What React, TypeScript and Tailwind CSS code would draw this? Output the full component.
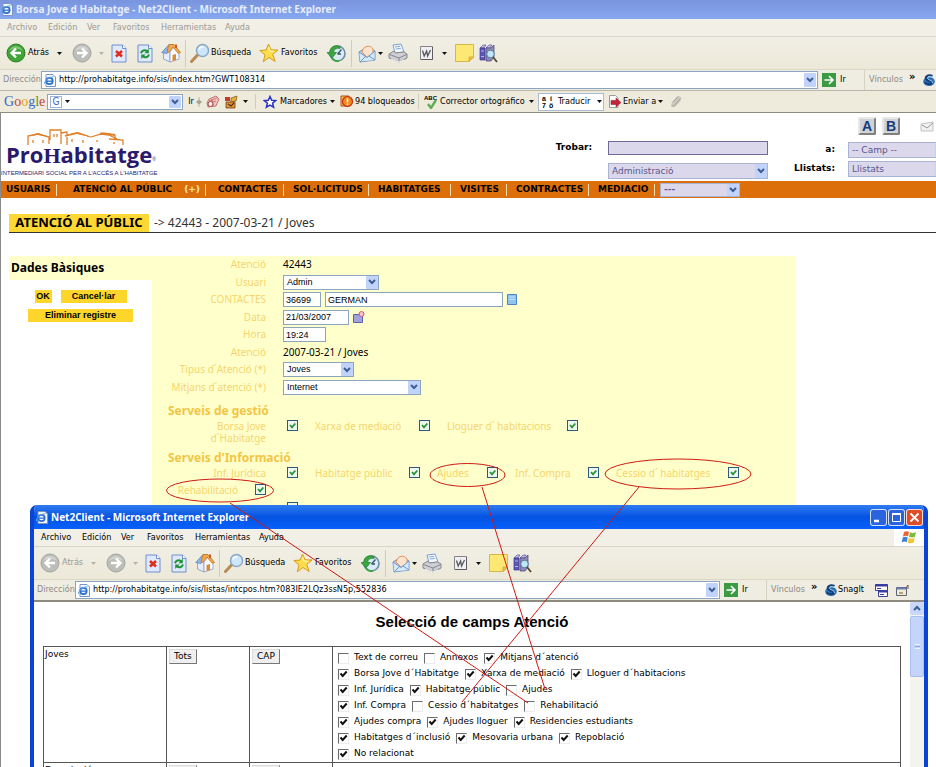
import React, { FC, ReactNode } from "react";

type Option = { label: string; checked: boolean };

/* ---------- small shared pieces ---------- */

const Caret: FC<{ muted?: boolean }> = ({ muted }) => (
  <svg width="5" height="3" viewBox="0 0 5 3" className="shrink-0">
    <path d="M0 0h5L2.500 3z" fill={muted ? "#b5b3a8" : "#111"} />
  </svg>
);

const Chevron = () => (
  <svg width="8" height="6" viewBox="0 0 8 6">
    <path d="M1 1l3 3 3-3" fill="none" stroke="#3d5d94" strokeWidth="2" />
  </svg>
);

const DropButton = () => (
  <span className="pointer-events-none absolute inset-y-px right-px flex w-[12px] items-center justify-center rounded-[1px] bg-[#c1d3fb]">
    <Chevron />
  </span>
);

const Select: FC<{ name: string; value: string; box: string; tone?: string }> = ({
  name,
  value,
  box,
  tone = "bg-white text-black border-[#8aa5bd]",
}) => (
  <span className={"relative flex shrink-0 " + box}>
    <select
      id={name}
      aria-label={name}
      defaultValue={value}
      className={"h-full w-full appearance-none border pl-[3px] leading-none outline-none " + tone}
    >
      <option>{value}</option>
    </select>
    <DropButton />
  </span>
);

const FormCheck: FC<{ id: string }> = ({ id }) => (
  <span className="relative flex size-[11px] shrink-0">
    <input
      id={id}
      type="checkbox"
      defaultChecked
      className="peer size-full appearance-none border border-[#2c5a78] bg-[#eef7ec]"
    />
    <svg
      viewBox="0 0 11 11"
      className="pointer-events-none invisible absolute inset-0 peer-checked:visible"
    >
      <path d="M3 5l2 2.300 3.300-3.800" fill="none" stroke="#27913c" strokeWidth="1.800" />
    </svg>
  </span>
);

/* ---------- toolbar icons ---------- */

const PageE = () => (
  <svg width="12" height="13" viewBox="0 0 12 13" className="shrink-0">
    <path d="M2 .5h7l2.500 2.500v9.500H2z" fill="#f4f8ff" stroke="#7d93c4" />
    <circle cx="5.500" cy="7" r="3.200" fill="none" stroke="#2a6fd0" strokeWidth="1.700" />
    <path d="M3 7.200h5.500" stroke="#2a6fd0" strokeWidth="1.300" />
    <path d="M.5 10C0 7 5 2.500 9.500 2.800" fill="none" stroke="#5fa8ea" />
  </svg>
);

const CircleArrow: FC<{ green?: boolean; back?: boolean }> = ({ green, back }) => (
  <svg width="20" height="20" viewBox="0 0 20 20" className="shrink-0">
    <circle
      cx="10"
      cy="10"
      r="9"
      fill={green ? "#3fa535" : "#bdbdb9"}
      stroke={green ? "#2c7f27" : "#a4a4a0"}
    />
    <path d="M3 8a7.500 7.500 0 0 1 14 0c-4-3-10-3-14 0z" fill="#fff" opacity=".35" />
    <path
      d={back ? "M15 10H6m4-4.500L5.500 10l4.500 4.500" : "M5 10h9m-4-4.500l4.500 4.500-4.500 4.500"}
      fill="none"
      stroke="#fff"
      strokeWidth="2.400"
    />
  </svg>
);

const StopIcon = () => (
  <svg width="16" height="19" viewBox="0 0 16 19">
    <path d="M1 1h10.500L15 4.500V18H1z" fill="#dfe9fb" stroke="#6f8fd0" />
    <path d="M11.500 1v3.500H15" fill="#fff" stroke="#6f8fd0" />
    <path d="M5 7l6 5.500M11 7l-6 5.500" stroke="#dd2c1a" strokeWidth="2.600" />
  </svg>
);

const RefreshIcon = () => (
  <svg width="16" height="19" viewBox="0 0 16 19">
    <path d="M1 1h10.500L15 4.500V18H1z" fill="#dfe9fb" stroke="#6f8fd0" />
    <path d="M11.500 1v3.500H15" fill="#fff" stroke="#6f8fd0" />
    <path d="M4 9.200c.6-3 4-3.700 6-2M12 10.500c-.8 3-4.200 3.500-6 1.800" fill="none" stroke="#1f9436" strokeWidth="2" />
    <path d="M11.800 4.500v4.700H7.500zM4.200 15v-4.500h4.300z" fill="#1f9436" />
  </svg>
);

const HomeIcon = () => (
  <svg width="20" height="20" viewBox="0 0 20 20">
    <path d="M2.500 10v6l6.500 3V9L7 4z" fill="#e8edfb" stroke="#7e96cc" strokeWidth=".8" />
    <path d="M9 19l9-3V8l-4-5-5 6z" fill="#fbfbff" stroke="#8c9cc9" strokeWidth=".8" />
    <path d="M.8 9.500L8 1.500l4 .5-6 8.500z" fill="#8eb4ee" stroke="#5e82c4" strokeWidth=".8" />
    <path d="M8 1.500l5 0 6.500 8-2.300.8L12 4 7.500 9.500 6 8.500z" fill="#f3a94c" stroke="#c27418" strokeWidth=".8" />
    <path d="M11.500 12l3.500-1v6l-3.500 1.200z" fill="#d98a35" />
    <path d="M14 1.500h2v3.500h-2z" fill="#c9583a" />
  </svg>
);

const SearchIcon = () => (
  <svg width="20" height="20" viewBox="0 0 20 20">
    <path d="M1.500 18.500l6.500-7" stroke="#b98a55" strokeWidth="3" strokeLinecap="round" />
    <circle cx="12.500" cy="7.500" r="6" fill="#cde6fb" stroke="#8aa7c6" strokeWidth="1.500" />
    <path d="M9 6.500c.8-2 2.500-3 4.500-2.700" fill="none" stroke="#fff" strokeWidth="1.500" />
  </svg>
);

const StarIcon = () => (
  <svg width="20" height="20" viewBox="0 0 20 20">
    <path
      d="M9.500 1l2.600 5.800 6.900.2-5.300 4.300 2.500 7.200-6.200-4-5.700 4.300 1.700-6.900L.8 7.500l6.200-.4z"
      fill="#fddc4e"
      stroke="#d89a1e"
    />
    <path d="M9.500 4l1.300 4 4 .3" fill="none" stroke="#fff6b8" strokeWidth="1.300" />
  </svg>
);

const HistoryIcon = () => (
  <svg width="19" height="19" viewBox="0 0 19 19">
    <circle cx="10.500" cy="9.500" r="7.500" fill="#d9ebf6" stroke="#6e8da6" strokeWidth="1.600" />
    <path d="M10.500 10l4-4.500M10.500 10h3.500" stroke="#3a536b" strokeWidth="1.300" />
    <path d="M13 2.500C7 0 2.500 4 2.800 8.500H0L5 14l4.500-5.500H6.800C6.500 6 9 3.800 13 4.500z" fill="#3aa63f" stroke="#237a2b" strokeWidth=".7" />
    <path d="M5 14c1.500 2.500 4 3.500 7 2.800" fill="none" stroke="#3aa63f" strokeWidth="1.800" />
  </svg>
);

const MailIcon = () => (
  <svg width="18" height="19" viewBox="0 0 18 19">
    <path d="M1 8l8-5 8 4v9L2 18z" fill="#bcd8f4" stroke="#6e94c2" />
    <path d="M4 8c1-6 8-8 11-3v5l-6 3z" fill="#fbe3d0" stroke="#e2935a" />
    <path d="M1.500 8.500L9 13l7.500-5.500V16L2 17.500z" fill="#d6e9fb" />
    <path d="M1 8l8 5.500L17 7M2 18l5.500-5.500M17 16l-6-4" fill="none" stroke="#6e94c2" />
  </svg>
);

const PrintIcon = () => (
  <svg width="20" height="20" viewBox="0 0 20 20">
    <path d="M5 2l8-1 3 8-9 1z" fill="#f3f8ff" stroke="#7c9fd6" />
    <path d="M7 4l5-.6M7.800 6l5-.6" stroke="#86a8dc" />
    <path d="M1 11l5-3 1.500 2 8-1 3.500 2v4l-8 4-10-4z" fill="#d0d0d4" stroke="#85858e" />
    <path d="M1.500 11.500l9.500 3.500 7.500-3.500M11 15v3.500" fill="none" stroke="#85858e" />
    <path d="M3 16l8 3 5-2" fill="none" stroke="#f8f8f8" />
  </svg>
);

const WordIcon = () => (
  <svg width="13" height="14" viewBox="0 0 13 14">
    <path d="M.5.5h12v13H.5z" fill="#f0f0f0" stroke="#84848a" />
    <path d="M12.500 1v12.500H1" fill="none" stroke="#5c5c62" />
    <path d="M2.500 4.500l1.700 5.500L6.600 5l1 5L10.500 4" fill="none" stroke="#55565e" strokeWidth="1.300" />
  </svg>
);

const NoteIcon = () => (
  <svg width="19" height="18" viewBox="0 0 19 18">
    <path d="M.5.5h18V13L14 17.500H.5z" fill="#fde874" stroke="#d9b64a" />
    <path d="M18.500 13H14v4.500z" fill="#f3c63c" stroke="#c89d2c" strokeWidth=".7" />
  </svg>
);

const BooksIcon = () => (
  <svg width="19" height="19" viewBox="0 0 19 19">
    <path d="M1 4l3-3h3l-2 3zM7 4l3-3h3l-2 3z" fill="#c8c4e8" stroke="#56509c" strokeWidth=".7" />
    <path d="M1 4h5v12H1z" fill="#5c56b4" stroke="#3d3889" strokeWidth=".7" />
    <path d="M7 4h5l3-3v12l-3 4H7z" fill="#8f8bb8" stroke="#44406e" strokeWidth=".7" />
    <path d="M2 7h3M2 12.500h3" stroke="#b7b3ee" />
    <circle cx="11.500" cy="10" r="3.800" fill="#bfe6f8" stroke="#5a7d93" />
    <path d="M14 13l4 5" stroke="#54452f" strokeWidth="1.800" />
  </svg>
);

const WindowsFlag = () => (
  <svg width="16" height="15" viewBox="0 0 16 15">
    <path d="M3 2c2-1.200 3.500-1 5 0L7 6.500c-1.500-1-3-1-5 0z" fill="#e9642f" />
    <path d="M9 2.300c2 1 4 1 6-.2L14 6.700c-2 1-4 1-6 .1z" fill="#7dbb3c" />
    <path d="M1.700 7.500c2-1.100 3.500-1 5 0l-1 4.800c-1.500-1-3-1-5 .1z" fill="#3c7fd8" />
    <path d="M7.700 8c2 1 4 1 6-.2l-1 4.700c-2 1-4 1-6 .2z" fill="#f6c332" />
  </svg>
);

const SnagItIcon = () => (
  <svg width="12" height="13" viewBox="0 0 12 13" className="shrink-0">
    <ellipse cx="6" cy="7.500" rx="5.800" ry="4.500" fill="#2c6fb4" />
    <path d="M9.500 2C5 0 1 3 3.500 5.500S9 7 8.500 9 4 10 1.500 8.500" fill="none" stroke="#123f75" strokeWidth="2" />
    <path d="M9.500 3C6 2 3.500 3.500 5 5s5 1.500 4.500 4" fill="none" stroke="#a9d6f5" />
  </svg>
);

/* ---------- browser bars ---------- */

const Menu: FC<{ muted?: boolean; flag?: boolean }> = ({ muted, flag }) => (
  <nav
    className={
      "flex h-[18px] shrink-0 items-center border-b border-[#d9d6c8] bg-[#f1efe6] " +
      (muted ? "text-[#9b9a92]" : "text-black")
    }
  >
    <button className="w-[41px] pl-[7px] text-left">Archivo</button>
    <button className="w-[39px] pl-[7px] text-left">Edición</button>
    <button className="w-[26px] pl-[7px] text-left">Ver</button>
    <button className="w-[48px] pl-[7px] text-left">Favoritos</button>
    <button className="w-[64px] pl-[7px] text-left">Herramientas</button>
    <button className="pl-[7px] text-left">Ayuda</button>
    {flag && (
      <span className="ml-auto flex h-full w-[30px] items-center justify-center bg-white">
        <WindowsFlag />
      </span>
    )}
  </nav>
);

const Toolbar: FC<{ muted?: boolean }> = ({ muted }) => (
  <div className="flex h-[33px] shrink-0 items-center border-b border-[#dcd8c6] bg-gradient-to-b from-[#f1efe5] to-[#ece9d9] pl-[6px]">
    <button
      className={"flex w-[66px] shrink-0 items-center gap-[2px] " + (muted ? "text-[#9b9a92]" : "")}
    >
      <CircleArrow green={!muted} back />
      <span className="w-[27px] text-left">Atrás</span>
      <Caret muted={muted} />
    </button>
    <button aria-label="Adelante" className="flex w-[39px] shrink-0 items-center gap-[7px]">
      <CircleArrow />
      <Caret muted />
    </button>
    <button aria-label="Detener" className="w-[26px] shrink-0"><StopIcon /></button>
    <button aria-label="Actualizar" className="w-[24px] shrink-0"><RefreshIcon /></button>
    <button aria-label="Inicio" className="h-[27px] w-[25px] shrink-0 border-r border-[#cfccbc]">
      <HomeIcon />
    </button>
    <button className="ml-[4px] flex w-[69px] shrink-0 items-center gap-px">
      <SearchIcon />
      Búsqueda
    </button>
    <button className="flex w-[68px] shrink-0 items-center gap-[2px]">
      <StarIcon />
      Favoritos
    </button>
    <button aria-label="Historial" className="h-[27px] w-[25px] shrink-0 border-r border-[#cfccbc]">
      <HistoryIcon />
    </button>
    <button aria-label="Correo" className="ml-[6px] flex w-[30px] shrink-0 items-center gap-[2px]">
      <MailIcon />
      <Caret />
    </button>
    <button aria-label="Imprimir" className="w-[32px] shrink-0"><PrintIcon /></button>
    <button aria-label="Editar" className="flex w-[35px] shrink-0 items-center gap-[9px]">
      <WordIcon />
      <Caret />
    </button>
    <button aria-label="Nota" className="w-[24px] shrink-0"><NoteIcon /></button>
    <button aria-label="Referencia" className="w-[24px] shrink-0"><BooksIcon /></button>
  </div>
);

const AddressBar: FC<{ id: string; url: string; side: string; full?: boolean }> = ({
  id,
  url,
  side,
  full,
}) => (
  <div className="flex h-[20px] shrink-0 items-center bg-[#efede2]">
    <label htmlFor={id} className="w-[41px] shrink-0 pl-[3px] text-[#8b8a83]">
      Dirección
    </label>
    <div className="relative flex h-[18px] min-w-0 flex-1 items-center gap-[3px] border border-[#8aa5bd] bg-white pl-[2px]">
      <PageE />
      <input id={id} defaultValue={url} className="min-w-0 flex-1 bg-transparent outline-none" />
      <DropButton />
    </div>
    <div className={"flex h-full shrink-0 items-center overflow-hidden " + side}>
      <button className="flex w-[46px] shrink-0 items-center gap-[4px] pl-[4px]">
        <svg width="14" height="14" viewBox="0 0 14 14">
          <path d="M0 0h14v14H0z" fill="#3b9b42" />
          <path d="M2.500 7h8M7 3l4 4-4 4" fill="none" stroke="#fff" strokeWidth="1.600" />
        </svg>
        Ir
      </button>
      <button className="flex h-full w-[53px] shrink-0 items-center gap-[6px] border-l border-[#d5d2c2] pl-[4px] text-[#8b8a83]">
        Vínculos
        <span className="mb-[8px] text-[11px] leading-none font-bold text-black">»</span>
      </button>
      <button aria-label="SnagIt" className="ml-[6px] flex shrink-0 items-center gap-px">
        <SnagItIcon />
        {full && "SnagIt"}
      </button>
      {full && (
        <span className="ml-[11px] flex gap-[8px]">
          <svg width="13" height="13" viewBox="0 0 13 13">
            <path d="M.5.5h12v6H.5zM3.500 6.500h9v6h-9z" fill="#fff" stroke="#3a3f9e" />
            <path d="M.5.5h12v2H.5zM3.500 6.500h9v2h-9z" fill="#3a3f9e" />
            <path d="M2 4.500h4M5 10.500h4" stroke="#3a3f9e" />
          </svg>
          <svg width="14" height="13" viewBox="0 0 14 13">
            <path d="M.5 3.500h10v8H.5z" fill="#f3ecd3" stroke="#5d6473" />
            <path d="M.5 3.500h10v2H.5z" fill="#6c7fb5" />
            <path d="M3 9h4M10 4l2-3v4" fill="none" stroke="#6a5a3c" />
          </svg>
        </span>
      )}
    </div>
  </div>
);

const GoogleBar = () => (
  <div className="flex h-[23px] shrink-0 items-center overflow-hidden border-y border-t-[#b9b7a9] border-b-[#8d8b7e] bg-[#eeebdd]">
    <span className="w-[47px] shrink-0 pl-[4px] font-['Liberation_Serif',serif] text-[14px]">
      <span className="text-[#3a66c9]">G</span>
      <span className="text-[#cf3d2e]">o</span>
      <span className="text-[#dba520]">o</span>
      <span className="text-[#3a66c9]">g</span>
      <span className="text-[#3c9a46]">l</span>
      <span className="text-[#cf3d2e]">e</span>
    </span>
    <span className="relative flex h-[16px] w-[136px] shrink-0 items-center gap-[3px] border border-[#8aa5bd] bg-white pl-[2px]">
      <span className="flex size-[12px] items-center justify-center border border-[#9fb3d8] text-[10px] text-[#3a66c9]">
        G
      </span>
      <Caret />
      <input aria-label="Buscar" className="w-[90px] outline-none" />
      <DropButton />
    </span>
    <button className="w-[13px] shrink-0 pl-[3px]">Ir</button>
    <svg width="6" height="10" viewBox="0 0 6 10" className="shrink-0">
      <path d="M3 0v10" stroke="#bdbaa9" />
      <path d="M0 5l3-2.500L6 5 3 7.500z" fill="#a5a396" />
    </svg>
    <svg width="14" height="13" viewBox="0 0 14 13" className="ml-[4px] shrink-0">
      <path d="M3 4l7-3 3 3-3 7-8 1-1-4z" fill="#f2c4c0" stroke="#b0605a" strokeWidth=".8" />
      <path d="M3 6l8-3M3 8.500l7-2.500M5.500 4l2 6.500" stroke="#c4615c" strokeWidth=".8" />
      <circle cx="4.500" cy="9" r="2.500" fill="#f7eeee" stroke="#a54848" />
    </svg>
    <svg width="14" height="14" viewBox="0 0 14 14" className="ml-[4px] shrink-0">
      <path d="M1 2h5v4H1z" fill="#c33b28" />
      <path d="M7 3l6-2-1 5-5 1z" fill="#e2b12f" stroke="#7a5417" strokeWidth=".7" />
      <path d="M2 7h9v6H2z" fill="#e09336" stroke="#6e3d17" strokeWidth=".8" />
      <path d="M4 9l3 2 3-3" fill="none" stroke="#54330f" strokeWidth="1.200" />
    </svg>
    <span className="flex h-[15px] w-[18px] shrink-0 items-center border-r border-[#cfccbc] pl-[5px]">
      <Caret />
    </span>
    <button className="flex w-[84px] shrink-0 items-center gap-[3px] pl-[7px]">
      <svg width="14" height="14" viewBox="0 0 14 14">
        <path
          d="M7 1.500l1.700 3.700 3.900.4-3 2.600 1 4L7 10.100l-3.600 2.100 1-4-3-2.600 3.900-.4z"
          fill="#fff"
          stroke="#2531c8"
          strokeWidth="1.500"
        />
      </svg>
      Marcadores
      <Caret />
    </button>
    <button className="flex h-[15px] w-[79px] shrink-0 items-center gap-[2px] border-r border-[#cfccbc]">
      <svg width="13" height="13" viewBox="0 0 13 13">
        <path d="M1 1h8v10H1z" fill="#f5c84b" stroke="#b4481d" />
        <circle cx="7.500" cy="6.500" r="5" fill="#f08a1d" stroke="#c9301a" strokeWidth="1.200" />
        <path d="M7.500 3.500v3.800M7.500 8.500v1.300" stroke="#fff" strokeWidth="1.500" />
      </svg>
      94 bloqueados
    </button>
    <button className="flex w-[119px] shrink-0 items-center gap-[2px] pl-[5px]">
      <svg width="14" height="14" viewBox="0 0 14 14">
        <text x="0" y="5" fontSize="6" fontWeight="bold" fontFamily="Liberation Sans">ABC</text>
        <path d="M4 9l3 4 5-8" fill="none" stroke="#5fae57" strokeWidth="2.400" />
      </svg>
      <span className="w-[87px] text-left">Corrector ortográfico</span>
      <Caret />
    </button>
    <button className="flex h-[18px] w-[66px] shrink-0 items-center gap-[4px] border border-[#a9bcd4] bg-white pl-[3px]">
      <svg width="12" height="14" viewBox="0 0 12 14">
        <g fontSize="7" fontWeight="bold" fontFamily="Liberation Sans">
          <text x="0" y="6">a</text>
          <text x="8" y="6">í</text>
          <text x="0" y="13">7</text>
          <text x="7" y="13">ö</text>
        </g>
      </svg>
      <span className="w-[35px] text-left">Traducir</span>
      <Caret />
    </button>
    <button className="flex w-[66px] shrink-0 items-center gap-[2px] pl-[4px]">
      <svg width="13" height="13" viewBox="0 0 13 13">
        <path d="M1.500.5h6L10 3v9.500H1.500z" fill="#fff" stroke="#9a9a9a" />
        <path d="M3 5.500h5V3l5 4.500-5 4.500V9.500H3z" fill="#c2243a" stroke="#8a1426" strokeWidth=".5" />
      </svg>
      Enviar a
      <Caret />
    </button>
    <svg width="12" height="13" viewBox="0 0 12 13" className="shrink-0">
      <path d="M1 11l1-4 6-6 3 1-.5 4L5 12z" fill="#c9c7be" />
      <path d="M8 1.500L3 7M10.500 3.500L5 10M1.500 11h3" stroke="#a3a197" />
    </svg>
  </div>
);

/* ---------- ProHabitatge page ---------- */

const Logo = () => (
  <a href="#inici" className="mt-[15px] block w-[160px] shrink-0 whitespace-nowrap">
    <svg width="110" height="18" viewBox="0 0 110 18" className="ml-[24px] block">
      <g fill="none" stroke="#e0812a" strokeWidth="1.300">
        <path d="M3 17V8l10-2 11 3v7M25 12V2h11v14M36 5l6-1v4M40 8l12-3 14 4M42 9v8M66 9l10-3 8 1 8 4M76 7V5l14 2v4M84 11l14 1v5" />
        <path d="M8 12v3M18 12v3M29 6v3M32 6v3M47 11v3M58 12v3M72 12v2M89 14v2" />
      </g>
      <path d="M2 8l11-3 12 4-12-2zM40 7l13-3 13 5-14-3zM76 4l14 2v2z" fill="#e0812a" />
    </svg>
    <span className="-mt-[4px] block pl-[5px] text-[22px] leading-[24px] font-bold text-[#2b1a6b]">
      <span className="font-['Open_Sans','Noto_Sans',sans-serif]">Pro</span>
      <span className="font-['Liberation_Serif',serif]">H</span>
      <span className="font-['Open_Sans','Noto_Sans',sans-serif]">abitatge</span>
      <sup className="font-['Liberation_Sans',sans-serif] text-[5px] font-normal">®</sup>
    </span>
    <span className="mt-px block font-['Liberation_Sans',sans-serif] text-[6px] leading-[8px] text-[#2b1a6b]">
      INTERMEDIARI SOCIAL PER A L'ACCÉS A L'HABITATGE
    </span>
  </a>
);

const LetterButton: FC<{ children: ReactNode }> = ({ children }) => (
  <button className="flex size-[18px] items-center justify-center rounded-[2px] border-2 border-t-[#e8e8e8] border-r-[#7f7f7f] border-b-[#7f7f7f] border-l-[#e8e8e8] bg-[#cfd2d6] font-['Liberation_Sans',sans-serif] text-[14px] leading-none font-bold text-[#173a78]">
    {children}
  </button>
);

const lilac = "bg-[#dad8ea] text-[#5b5690] border-[#a9b4d4]";

const PageHeader = () => (
  <header className="flex h-[68px] shrink-0 justify-between overflow-hidden bg-white">
    <Logo />
    <div className="flex shrink-0 font-['DejaVu_Sans',sans-serif]">
      <div className="mt-[28px] grid h-[38px] grid-cols-[40px_160px] content-between gap-x-[16px]">
        <label htmlFor="trobar" className="text-right font-bold">Trobar:</label>
        <input id="trobar" className="h-[14px] border border-[#6f6b96] bg-[#dad8ea] outline-none" />
        <Select name="Departament" value="Administració" box="col-start-2 h-[16px]" tone={lilac} />
      </div>
      <div className="w-[168px]">
        <div className="mt-[3px] flex h-[20px] items-center gap-[6px] pl-[90px]">
          <LetterButton>A</LetterButton>
          <LetterButton>B</LetterButton>
          <svg width="14" height="11" viewBox="0 0 14 11" className="ml-[14px] shrink-0">
            <path d="M1 3l12-2v9H1z" fill="#f1f1f1" stroke="#c2c2c2" />
            <path d="M2 4l5 3 6-5" fill="none" stroke="#9a9a9a" />
          </svg>
        </div>
        <div className="mt-[6px] grid grid-cols-[67px_100px] items-center gap-x-[13px] gap-y-[3px]">
          <label htmlFor="Camp" className="text-right font-bold">a:</label>
          <Select name="Camp" value="-- Camp --" box="h-[16px]" tone={lilac} />
          <label htmlFor="Llistats" className="text-right font-bold">Llistats:</label>
          <Select name="Llistats" value="Llistats" box="h-[16px]" tone={lilac} />
        </div>
      </div>
    </div>
  </header>
);

const navItems = [
  { text: "USUARIS", box: "w-[56px] pl-[5px]" },
  { text: "ATENCIÓ AL PÚBLIC", box: "w-[149px] pl-[16px]", plus: true },
  { text: "CONTACTES", box: "w-[78px] pl-[12px]" },
  { text: "SOL·LICITUDS", box: "w-[85px] pl-[9px]" },
  { text: "HABITATGES", box: "w-[82px] pl-[9px]" },
  { text: "VISITES", box: "w-[56px] pl-[9px]" },
  { text: "CONTRACTES", box: "w-[82px] pl-[9px]" },
  { text: "MEDIACIO", box: "w-[66px] pl-[9px]" },
];

const NavBar = () => (
  <nav className="flex h-[17px] shrink-0 items-center bg-[#dc6f0a] font-['DejaVu_Sans',sans-serif] font-bold">
    {navItems.map((item) => (
      <a
        key={item.text}
        href="#menu"
        className={
          "flex h-[12px] shrink-0 items-center justify-between border-r border-[#f6dcae] pr-[5px] whitespace-nowrap text-black " +
          item.box
        }
      >
        {item.text}
        {item.plus && <span className="text-[#ffe9b8]">(+)</span>}
      </a>
    ))}
    <Select name="Altres" value="---" box="ml-[5px] h-[14px] w-[80px]" tone={lilac} />
  </nav>
);

const Row: FC<{ label: string; htmlFor?: string; children: ReactNode }> = ({
  label,
  htmlFor,
  children,
}) => (
  <div className="flex items-center">
    <label htmlFor={htmlFor} className="w-[114px] shrink-0 text-right text-[#f6d56c]">
      {label}
    </label>
    <div className="ml-[17px] flex items-center gap-[4px]">{children}</div>
  </div>
);

const field =
  "h-[15px] border border-[#8aa5bd] bg-white pl-[2px] font-['Liberation_Sans',sans-serif] text-[9px] outline-none";
const formSelect = "h-[15px] font-['Liberation_Sans',sans-serif] text-[9px] ";

const gestio = [
  { text: "Borsa Jove\nd´Habitatge", box: "w-[118px] pr-[4px] text-right" },
  { text: "Xarxa de mediació", box: "w-[87px]" },
  { text: "Lloguer d´ habitacions", box: "w-[103px]" },
];

const informacio = [
  { text: "Inf. Jurídica", box: "w-[118px] pr-[4px] text-right" },
  { text: "Habitatge públic", box: "w-[77px]" },
  { text: "Ajudes", box: "w-[33px]" },
  { text: "Inf. Compra", box: "w-[56px]" },
  { text: "Cessio d´ habitatges", box: "w-[95px]" },
  { text: "Rehabilitació", box: "w-[86px] text-right" },
];

const Services: FC<{ items: { text: string; box: string }[] }> = ({ items }) => (
  <div className="flex flex-wrap items-start gap-x-[17px] gap-y-[5px]">
    {items.map((item) => (
      <span key={item.text} className="flex gap-[17px]">
        <label
          htmlFor={item.text}
          className={"shrink-0 leading-[12px] whitespace-pre text-[#f6d56c] " + item.box}
        >
          {item.text}
        </label>
        <FormCheck id={item.text} />
      </span>
    ))}
  </div>
);

const RecordForm = () => (
  <form className="flex items-start pl-[8px] font-['Noto_Sans',sans-serif] text-[10px]">
    <aside className="w-[143px] shrink-0">
      <h2 className="h-[24px] bg-[#ffffcc] pl-[2px] text-[12px] leading-[24px] font-bold">
        Dades Bàsiques
      </h2>
      <div className="flex flex-wrap justify-center gap-x-[9px] gap-y-[6px] pt-[10px] font-['Liberation_Sans',sans-serif] text-[9px] font-bold">
        <button type="button" className="h-[13px] w-[17px] bg-[#fdd52b]">OK</button>
        <button type="button" className="h-[13px] w-[66px] bg-[#fdd52b]">Cancel·lar</button>
        <button type="button" className="h-[13px] w-[105px] bg-[#fdd52b]">Eliminar registre</button>
      </div>
    </aside>
    <div className="mr-[140px] h-[520px] min-w-0 flex-1 bg-[#ffffcc]">
      <div className="grid h-[140px] auto-rows-fr">
        <Row label="Atenció">42443</Row>
        <Row label="Usuari" htmlFor="Usuari">
          <Select name="Usuari" value="Admin" box={formSelect + "w-[96px]"} />
        </Row>
        <Row label="CONTACTES" htmlFor="contacte">
          <input id="contacte" defaultValue="36699" className={field + " w-[38px]"} />
          <input aria-label="Nom" defaultValue="GERMAN" className={field + " w-[178px]"} />
          <svg width="10" height="11" viewBox="0 0 10 11">
            <path d="M.5.5h9v10h-9z" fill="#8fc3f2" stroke="#4c86c6" />
            <path d="M2 3h6M2 5.500h6" stroke="#c3e2fb" />
          </svg>
        </Row>
        <Row label="Data" htmlFor="data">
          <input id="data" defaultValue="21/03/2007" className={field + " w-[66px]"} />
          <svg width="12" height="12" viewBox="0 0 12 12">
            <path d="M.5 3.500h9v8h-9z" fill="#a3a3dc" stroke="#5b62ae" />
            <circle cx="8.500" cy="3" r="2.500" fill="#f6c3cf" stroke="#cf5a74" />
          </svg>
        </Row>
        <Row label="Hora" htmlFor="hora">
          <input id="hora" defaultValue="19:24" className={field + " w-[43px]"} />
        </Row>
        <Row label="Atenció">2007-03-21 / Joves</Row>
        <Row label="Tipus d´Atenció (*)" htmlFor="Tipus">
          <Select name="Tipus" value="Joves" box={formSelect + "w-[71px]"} />
        </Row>
        <Row label="Mitjans d´atenció (*)" htmlFor="Mitjans">
          <Select name="Mitjans" value="Internet" box={formSelect + "w-[138px]"} />
        </Row>
      </div>
      <h3 className="mt-[6px] h-[18px] pl-[16px] text-[12px] leading-[18px] font-bold text-[#f3c544]">
        Serveis de gestió
      </h3>
      <Services items={gestio} />
      <h3 className="mt-[5px] h-[18px] pl-[16px] text-[12px] leading-[18px] font-bold text-[#f3c544]">
        Serveis d'Informació
      </h3>
      <Services items={informacio} />
      <div className="mt-[6px] pl-[135px]">
        <FormCheck id="altres" />
      </div>
    </div>
  </form>
);

/* ---------- field picker window ---------- */

const on = (label: string): Option => ({ label, checked: true });
const off = (label: string): Option => ({ label, checked: false });

const fieldRows: Option[][] = [
  [off("Text de correu"), off("Annexos"), on("Mitjans d´atenció")],
  [on("Borsa Jove d´Habitatge"), on("Xarxa de mediació"), on("Lloguer d´habitacions")],
  [on("Inf. Jurídica"), on("Habitatge públic"), off("Ajudes")],
  [on("Inf. Compra"), off("Cessio d´habitatges"), off("Rehabilitació")],
  [on("Ajudes compra"), on("Ajudes lloguer"), on("Residencies estudiants")],
  [on("Habitatges d´inclusió"), on("Mesovaria urbana"), on("Repoblació")],
  [on("No relacionat")],
];

const descRows: Option[][] = [[off("Text de correu"), off("Annexos"), off("Mitjans d´atenció")]];

const OptionList: FC<{ rows: Option[][] }> = ({ rows }) => (
  <div className="pt-[3px]">
    {rows.map((row, i) => (
      <div key={i} className="flex h-[16px] items-center gap-[6px]">
        {row.map((option) => (
          <label key={option.label} className="flex items-center gap-[5px] whitespace-nowrap">
            <span className="relative flex size-[11px] shrink-0">
              <input
                type="checkbox"
                defaultChecked={option.checked}
                className="peer size-full appearance-none border border-t-[#6d6d6d] border-r-[#ececec] border-b-[#ececec] border-l-[#6d6d6d] bg-white"
              />
              <svg
                viewBox="0 0 11 11"
                className="pointer-events-none invisible absolute inset-0 peer-checked:visible"
              >
                <path d="M2.500 4.500l2.200 2.500 4-4.500" fill="none" stroke="#111" strokeWidth="2" />
              </svg>
            </span>
            {option.label}
          </label>
        ))}
      </div>
    ))}
  </div>
);

const smallButton =
  "mt-[2px] ml-[2px] h-[15px] border border-t-[#dcdcdc] border-r-[#777] border-b-[#777] border-l-[#dcdcdc] bg-[#efefef] px-[4px] leading-none";

const groups = [
  { name: "Joves", rows: fieldRows },
  { name: "Descripció", rows: descRows },
];

const PickerTable = () => (
  <table className="w-full table-fixed border-collapse border border-[#555] font-['DejaVu_Sans',sans-serif]">
    <colgroup>
      <col className="w-[123px]" />
      <col className="w-[83px]" />
      <col className="w-[83px]" />
      <col />
    </colgroup>
    <tbody>
      {groups.map((group) => (
        <tr key={group.name} className="align-top">
          <td className="border border-[#555] pt-px pl-px">{group.name}</td>
          <td className="border border-[#555]">
            <button className={smallButton}>Tots</button>
          </td>
          <td className="border border-[#555]">
            <button className={smallButton}>CAP</button>
          </td>
          <td className="border border-[#555] pl-[5px]">
            <OptionList rows={group.rows} />
          </td>
        </tr>
      ))}
    </tbody>
  </table>
);

const Scrollbar = () => (
  <div className="flex w-[14px] shrink-0 flex-col gap-px bg-[#f4f3ee]">
    <span className="flex h-[13px] rotate-180 items-center justify-center rounded-[2px] bg-[#c9d7fb]">
      <Chevron />
    </span>
    <span className="flex h-[61px] flex-col items-center justify-center gap-px rounded-[2px] border border-[#a9bff0] bg-[#c5d4fb]">
      <span className="h-px w-[5px] bg-[#eef3ff]" />
      <span className="h-px w-[5px] bg-[#8ea8e4]" />
      <span className="h-px w-[5px] bg-[#eef3ff]" />
    </span>
  </div>
);

const windowButton =
  "flex size-[17px] items-center justify-center rounded-[3px] border border-white/80";

const PickerWindow = () => (
  <section className="absolute top-[505px] right-[8px] bottom-0 left-[30px] flex flex-col overflow-hidden rounded-t-[7px] border-x-4 border-[#0b43d2] bg-white">
    <div className="flex h-[24px] shrink-0 items-center gap-[3px] bg-gradient-to-b from-[#2f7bf0] via-[#0453e2] to-[#0761fb] pr-[1px] pl-[2px]">
      <PageE />
      <h1 className="flex-1 font-['Noto_Sans',sans-serif] text-[10px] font-bold text-white">
        Net2Client - Microsoft Internet Explorer
      </h1>
      <span className="flex gap-[1px]">
        <button aria-label="Minimizar" className={windowButton + " bg-[#2a63e0]"}>
          <svg width="11" height="11"><path d="M1 9h5" stroke="#fff" strokeWidth="2.400" /></svg>
        </button>
        <button aria-label="Maximizar" className={windowButton + " bg-[#2a63e0]"}>
          <svg width="11" height="11">
            <path d="M1.500 2.500h8v7h-8z" fill="none" stroke="#fff" />
            <path d="M1 2h9" stroke="#fff" strokeWidth="2" />
          </svg>
        </button>
        <button aria-label="Cerrar" className={windowButton + " bg-[#dc4d2a]"}>
          <svg width="11" height="11"><path d="M1.500 1.500l8 8M9.500 1.500l-8 8" stroke="#fff" strokeWidth="1.800" /></svg>
        </button>
      </span>
    </div>
    <Menu flag />
    <Toolbar muted />
    <AddressBar
      id="popup-url"
      url="http://prohabitatge.info/sis/listas/intcpos.htm?083IE2LQz3ssN5p,552836"
      side="w-[204px]"
      full
    />
    <div className="flex min-h-0 flex-1 border-t-2 border-[#8d8b7e]">
      <div className="min-w-0 flex-1 pr-[9px] pl-[9px]">
        <h2 className="h-[44px] text-center font-['Liberation_Sans',sans-serif] text-[15px] leading-[40px] font-bold">
          Selecció de camps Atenció
        </h2>
        <PickerTable />
      </div>
      <Scrollbar />
    </div>
  </section>
);

// Red pen marks linking the ticked services with their unticked fields
const Annotations = () => (
  <svg
    width="936"
    height="767"
    viewBox="0 0 936 767"
    className="pointer-events-none absolute top-0 left-0"
  >
    <g fill="none" stroke="#cc1a14">
      <ellipse cx="220" cy="490.500" rx="53.500" ry="11.500" />
      <ellipse cx="467.500" cy="475" rx="37.500" ry="11.500" />
      <ellipse cx="678" cy="474" rx="73" ry="15" />
      <path d="M230 503L528 703M482 487L545 689M639 487L462 702" />
    </g>
  </svg>
);

const App = () => (
  <main className="relative flex h-screen flex-col overflow-hidden bg-white font-['DejaVu_Sans_Condensed','DejaVu_Sans',sans-serif] text-[9px] text-black">
    <div className="flex h-[19px] shrink-0 items-center gap-[3px] bg-gradient-to-b from-[#7a94de] to-[#86a8f0] pl-px font-['Noto_Sans',sans-serif] text-[10px] font-bold text-[#e6ecfb]">
      <PageE />
      Borsa Jove d Habitatge - Net2Client - Microsoft Internet Explorer
    </div>
    <Menu muted />
    <Toolbar />
    <AddressBar
      id="url"
      url="http://prohabitatge.info/sis/index.htm?GWT108314"
      side="w-[118px]"
    />
    <GoogleBar />
    <div className="flex min-h-0 flex-1 flex-col overflow-hidden border-l border-[#8a8a8a]">
      <PageHeader />
      <NavBar />
      <div className="mt-[16px] mb-[23px] ml-[8px] flex h-[19px] shrink-0 items-center gap-[5px] border-b border-[#333] font-['Noto_Sans',sans-serif]">
        <h1 className="flex h-full w-[140px] items-center justify-center bg-[#fdd835] text-[13px] font-bold">
          ATENCIÓ AL PÚBLIC
        </h1>
        <span className="text-[12px] text-[#333]">-&gt; 42443 - 2007-03-21 / Joves</span>
      </div>
      <RecordForm />
    </div>
    <PickerWindow />
    <Annotations />
  </main>
);

export default App;
